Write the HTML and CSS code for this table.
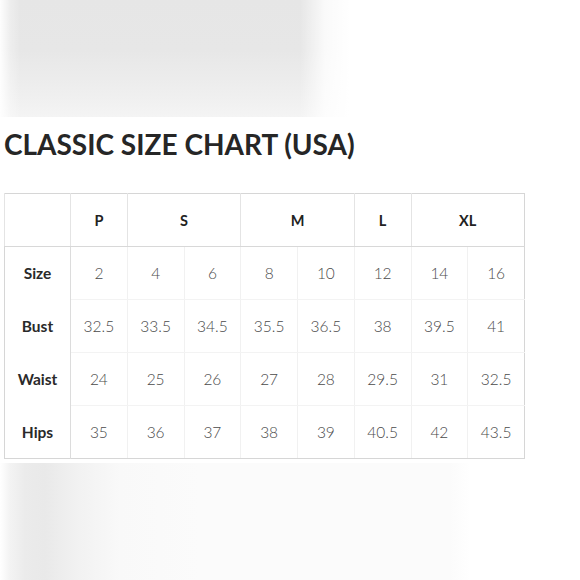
FILE: index.html
```html
<!DOCTYPE html>
<html>
<head>
<meta charset="utf-8">
<link rel="stylesheet" href="styles.css">
</head>
<body>
<div class="page">
  <div class="photo-top"></div>
  <h1 class="title">CLASSIC SIZE CHART (USA)</h1>
  <table class="chart">
    <colgroup>
      <col class="c-label">
      <col><col><col><col><col><col><col><col>
    </colgroup>
    <thead>
      <tr>
        <th class="corner"></th>
        <th>P</th>
        <th colspan="2">S</th>
        <th colspan="2">M</th>
        <th>L</th>
        <th colspan="2">XL</th>
      </tr>
    </thead>
    <tbody>
      <tr><th>Size</th><td>2</td><td>4</td><td>6</td><td>8</td><td>10</td><td>12</td><td>14</td><td>16</td></tr>
      <tr><th>Bust</th><td>32.5</td><td>33.5</td><td>34.5</td><td>35.5</td><td>36.5</td><td>38</td><td>39.5</td><td>41</td></tr>
      <tr><th>Waist</th><td>24</td><td>25</td><td>26</td><td>27</td><td>28</td><td>29.5</td><td>31</td><td>32.5</td></tr>
      <tr class="last"><th>Hips</th><td>35</td><td>36</td><td>37</td><td>38</td><td>39</td><td>40.5</td><td>42</td><td>43.5</td></tr>
    </tbody>
  </table>
  <div class="photo-bottom"></div>
</div>
</body>
</html>
```
FILE: styles.css
```css
html, body {
  margin: 0;
  padding: 0;
  background: #ffffff;
}
.page {
  width: 580px;
  height: 580px;
  overflow: hidden;
  display: flex;
  flex-direction: column;
  font-family: "Lato", "Open Sans", sans-serif;
}
.photo-top {
  height: 117px;
  flex: none;
  background:
    linear-gradient(to right, rgba(255,255,255,0.95) 0, rgba(255,255,255,0.3) 10px, rgba(255,255,255,0) 20px, rgba(255,255,255,0) 300px, rgba(255,255,255,0.8) 325px, #ffffff 350px),
    linear-gradient(to bottom, #e6e6e6 0, #e7e7e7 50px, #efefef 95px, #f4f4f4 117px);
}
.title {
  margin: 10px 0 0 4px;
  font-size: 28px;
  line-height: 34px;
  font-weight: 700;
  color: #262626;
  letter-spacing: 0;
  white-space: nowrap;
}
.chart {
  margin: 32px 0 0 4px;
  width: 521px;
  table-layout: fixed;
  border-collapse: collapse;
  border: 1px solid #d6d6d6;
  flex: none;
}
.chart col.c-label { width: 66px; }
.chart th, .chart td {
  height: 52px;
  padding: 0;
  text-align: center;
  vertical-align: middle;
  font-size: 15px;
}
.chart thead th {
  font-weight: 700;
  font-size: 14.5px;
  color: #222;
  border-left: 1px solid #e4e4e4;
  border-bottom: 1px solid #d8d8d8;
}
.chart tbody th {
  font-weight: 700;
  font-size: 15.5px;
  color: #2a2a2a;
  border-right: 1px solid #dcdcdc;
}
.chart tbody td {
  font-weight: 300;
  font-size: 15.5px;
  color: #4a4a4a;
  border-left: 1px solid #f1f1f1;
  border-bottom: 1px solid #f3f3f3;
}
.chart tbody tr.last td { border-bottom: 1px solid #d6d6d6; }
.chart tbody tr:first-child td { border-top: 1px solid #d8d8d8; }
.photo-bottom {
  margin-top: 4px;
  flex: 1;
  background:
    linear-gradient(to right, #ffffff 0, #f3f3f3 10px, #ebebeb 25px, #e9e9e9 45px, #f2f2f2 80px, #f9f9f9 120px, #fbfbfb 200px, #fbfbfb 450px, #fdfdfd 460px, #ffffff 470px);
}
```
